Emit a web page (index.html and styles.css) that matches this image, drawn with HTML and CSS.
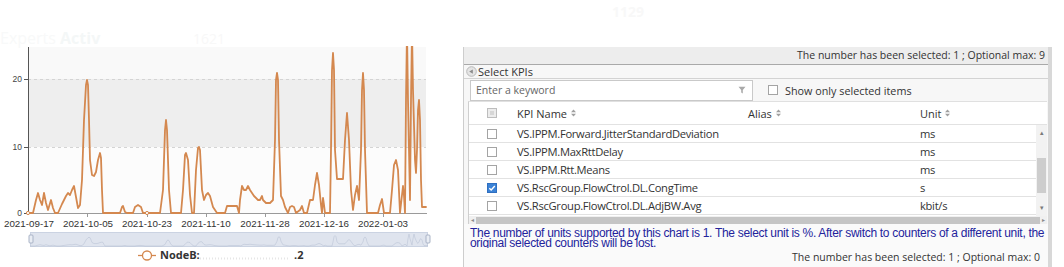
FILE: index.html
```html
<!DOCTYPE html>
<html lang="en">
<head>
<meta charset="utf-8">
<title>KPI chart</title>
<link rel="stylesheet" href="styles.css">
</head>
<body>
<div class="page">
  <section class="chart-col">
    <svg class="chart" width="463" height="267" viewBox="0 0 463 267">
      <defs>
        <clipPath id="plot"><rect x="28" y="46" width="399" height="168"/></clipPath>
        <path id="series" d="M28 213 L33 213 L36 200 L38 193 L40 200 L42 205 L44 193 L46 203 L48 210 L51 200 L53 208 L55 213 L58 213 L62 204 L66 196 L68 193 L70 195 L72 190 L74 186 L76 197 L78 208 L80 205 L82 180 L84 120 L86 85 L87 80 L88 85 L89 120 L90 160 L92 175 L94 176 L96 172 L98 160 L100 153 L101 158 L102 190 L103 213 L120 213 L122 207 L123 206 L125 212 L127 213 L133 213 L135 207 L138 205 L141 207 L143 213 L160 213 L163 190 L165 130 L166 120 L167 130 L169 190 L171 213 L181 213 L183 190 L185 155 L186 153 L188 160 L190 195 L192 213 L194 213 L196 170 L198 148 L199 147 L200 150 L202 190 L204 200 L206 195 L208 193 L210 196 L213 207 L217 213 L225 213 L227 206 L237 206 L239 213 L240 200 L242 186 L244 190 L246 190 L248 186 L250 190 L254 196 L258 200 L260 200 L262 196 L263 200 L266 203 L270 203 L273 200 L275 140 L276 80 L277 73 L278 80 L279 140 L281 196 L283 200 L285 207 L288 213 L290 207 L292 206 L294 207 L296 213 L300 210 L302 206 L304 213 L307 213 L310 200 L313 200 L315 185 L317 173 L319 185 L321 205 L322 213 L323 198 L324 205 L325 213 L330 213 L331 150 L332 70 L333 53 L334 70 L335 150 L337 179 L343 179 L345 140 L347 113 L349 140 L351 190 L353 210 L355 195 L357 186 L359 200 L361 150 L362 90 L363 73 L364 90 L365 150 L367 213 L378 213 L380 205 L382 199 L384 213 L390 213 L392 190 L394 165 L396 160 L398 170 L400 213 L402 195 L403 186 L404 196 L405 213 L406 100 L407 30 L408 100 L410 200 L411 100 L412 30 L413 90 L415 160 L416 173 L417 150 L418 110 L419 100 L420 120 L421 180 L422 207 L426 207"/>
      </defs>
      <text class="ghost-title" x="0" y="44">Experts <tspan class="ghost-bold">Activ</tspan></text>
      <text class="ghost-num" x="193" y="44">1621</text>

      <rect x="28" y="47" width="398" height="32" fill="#f9f9f9"/>
      <rect x="28" y="79" width="398" height="68" fill="#eeeeee"/>
      <rect x="28" y="147" width="398" height="66" fill="#fcfcfc"/>
      <line x1="28" y1="79.5" x2="426" y2="79.5" class="grid-dash"/>
      <line x1="28" y1="147.5" x2="426" y2="147.5" class="grid-dash"/>

      <line x1="28.5" y1="47" x2="28.5" y2="214" class="axis-y"/>
      <line x1="24" y1="79.5" x2="28" y2="79.5" class="axis-y"/>
      <line x1="24" y1="147.5" x2="28" y2="147.5" class="axis-y"/>
      <line x1="24" y1="213.5" x2="28" y2="213.5" class="axis-y"/>
      <text class="ylab" x="22" y="82">20</text>
      <text class="ylab" x="22" y="150">10</text>
      <text class="ylab" x="22" y="216">0</text>

      <line x1="28" y1="213.5" x2="427" y2="213.5" class="axis-x"/>
      <g class="axis-x">
        <line x1="87.5" y1="213" x2="87.5" y2="217"/>
        <line x1="147.5" y1="213" x2="147.5" y2="217"/>
        <line x1="206.5" y1="213" x2="206.5" y2="217"/>
        <line x1="265.5" y1="213" x2="265.5" y2="217"/>
        <line x1="324.5" y1="213" x2="324.5" y2="217"/>
        <line x1="383.5" y1="213" x2="383.5" y2="217"/>
      </g>
      <g class="xlab">
        <text x="29" y="227">2021-09-17</text>
        <text x="88" y="227">2021-10-05</text>
        <text x="147" y="227">2021-10-23</text>
        <text x="206" y="227">2021-11-10</text>
        <text x="265" y="227">2021-11-28</text>
        <text x="324" y="227">2021-12-16</text>
        <text x="383" y="227">2022-01-03</text>
      </g>

      <g clip-path="url(#plot)">
        <use href="#series" class="series-line"/>
      </g>
      <circle cx="28" cy="213" r="1.6" class="marker"/>
      <circle cx="147" cy="213" r="1.6" class="marker"/>

      <rect x="30.5" y="232.5" width="397" height="14" class="zoom-bg"/>
      <use href="#series" class="zoom-line" transform="translate(2 246) scale(1 0.065) translate(0 -213)"/>
      <rect x="29" y="235" width="4" height="8" rx="1" class="zoom-handle"/>
      <rect x="426" y="235" width="4" height="8" rx="1" class="zoom-handle"/>

      <line x1="138" y1="255.5" x2="156" y2="255.5" class="legend-line"/>
      <circle cx="147" cy="255.5" r="4.5" class="legend-dot"/>
      <text class="legend-text" x="160" y="259">NodeB:</text>
      <line x1="200" y1="258.5" x2="290" y2="258.5" class="redact"/>
      <text class="legend-text" x="294" y="259">.2</text>
    </svg>
  </section>

  <section class="kpi-col">
    <div class="ghost-top">1129</div>
    <div class="panel">
      <div class="panel-head">The number has been selected: 1 ; Optional max: 9</div>
      <div class="legend">
        <svg width="11" height="11" viewBox="0 0 11 11" class="legend-icon">
          <circle cx="5.5" cy="5.5" r="4.8" fill="#e4e4e4" stroke="#b9b9b9"/>
          <polygon points="3.2,5.6 6.8,3.4 6.8,7.8" fill="#8a8a8a"/>
        </svg>
        <span>Select KPIs</span>
      </div>
      <div class="toolbar">
        <div class="search">
          <span>Enter a keyword</span>
          <svg width="8" height="8" viewBox="0 0 8 8"><polygon points="0.5,0.8 7.5,0.8 4.8,4 4.8,7.5 3.2,6.6 3.2,4" fill="#a9a9a9"/></svg>
        </div>
        <label class="only"><span class="cb"></span>Show only selected items</label>
      </div>

      <div class="grid">
        <div class="row head-row">
          <span class="cell-cb"><span class="cb cb-partial"></span></span>
          <span class="hcell">KPI Name <svg class="sort" width="5" height="8" viewBox="0 0 5 8"><polygon points="0,3.2 2.5,0.5 5,3.2" /><polygon points="0,4.8 2.5,7.5 5,4.8"/></svg></span>
          <span class="hcell">Alias <svg class="sort" width="5" height="8" viewBox="0 0 5 8"><polygon points="0,3.2 2.5,0.5 5,3.2" /><polygon points="0,4.8 2.5,7.5 5,4.8"/></svg></span>
          <span class="hcell">Unit <svg class="sort" width="5" height="8" viewBox="0 0 5 8"><polygon points="0,3.2 2.5,0.5 5,3.2" /><polygon points="0,4.8 2.5,7.5 5,4.8"/></svg></span>
        </div>
        <div class="grid-body">
          <div class="rows">
            <div class="row"><span class="cell-cb"><span class="cb"></span></span><span>VS.IPPM.Forward.JitterStandardDeviation</span><span></span><span>ms</span></div>
            <div class="row"><span class="cell-cb"><span class="cb"></span></span><span>VS.IPPM.MaxRttDelay</span><span></span><span>ms</span></div>
            <div class="row"><span class="cell-cb"><span class="cb"></span></span><span>VS.IPPM.Rtt.Means</span><span></span><span>ms</span></div>
            <div class="row"><span class="cell-cb"><span class="cb cb-on"><svg width="8" height="8" viewBox="0 0 8 8"><polyline points="1.3,4.2 3.2,6 6.8,2" fill="none" stroke="#fff" stroke-width="1.4"/></svg></span></span><span>VS.RscGroup.FlowCtrol.DL.CongTime</span><span></span><span>s</span></div>
            <div class="row"><span class="cell-cb"><span class="cb"></span></span><span>VS.RscGroup.FlowCtrol.DL.AdjBW.Avg</span><span></span><span>kbit/s</span></div>
            <div class="row"><span class="cell-cb"><span class="cb"></span></span><span></span><span></span><span></span></div>
          </div>
          <div class="vscroll">
            <span class="arrow">&#9652;</span>
            <span class="vthumb"></span>
            <span class="arrow arrow-down">&#9662;</span>
          </div>
        </div>
        <div class="hscroll">
          <span class="harrow">&#9666;</span>
          <span class="hthumb"></span>
          <span class="harrow">&#9656;</span>
        </div>
      </div>

      <p class="note">The number of units supported by this chart is 1. The select unit is %. After switch to counters of a different unit, the original selected counters will be lost.</p>
      <div class="panel-foot">The number has been selected: 1 ; Optional max: 0</div>
    </div>
  </section>
</div>
</body>
</html>
```

FILE: styles.css
```css
* { box-sizing: border-box; margin: 0; padding: 0; }

body {
  margin: 0;
  width: 1064px;
  height: 267px;
  overflow: hidden;
  background: #ffffff;
  font-family: "Open Sans", "Noto Sans", sans-serif;
  color: #333333;
}

.page {
  display: flex;
  height: 267px;
}

/* ---------- chart ---------- */
.chart-col { width: 463px; flex: none; }
.chart { display: block; }

.ghost-title { font-family: "Open Sans", sans-serif; font-size: 16px; fill: #f8f9f9; }
.ghost-bold { font-weight: 700; fill: #f4f7f7; }
.ghost-num { font-family: "Open Sans", sans-serif; font-size: 14px; fill: #f8f8f8; }

.grid-dash { stroke: #d4d4d4; stroke-width: 1; stroke-dasharray: 3 3; }
.axis-y { stroke: #555555; stroke-width: 1; }
.axis-x { stroke: #9a9a9a; stroke-width: 1; }
.ylab { font-family: "Liberation Sans", sans-serif; font-size: 8.5px; fill: #444444; text-anchor: end; }
.xlab text { font-family: "Liberation Sans", sans-serif; font-size: 9.8px; fill: #333333; text-anchor: middle; }

.series-line {
  fill: none;
  stroke: #d4884f;
  stroke-width: 1.8;
  stroke-linejoin: round;
  stroke-linecap: round;
}
.marker { fill: #ffffff; stroke: #d4884f; stroke-width: 1; }

.zoom-bg { fill: #dfe4ee; stroke: #cbd3e2; stroke-width: 1; }
.zoom-line { fill: none; stroke: #b7c1d3; stroke-width: 1; vector-effect: non-scaling-stroke; }
.zoom-handle { fill: #e9edf4; stroke: #a9b3c6; stroke-width: 1; }

.legend-line { stroke: #d4884f; stroke-width: 1.3; }
.legend-dot { fill: #ffffff; stroke: #d4884f; stroke-width: 1.3; }
.legend-text { font-family: "Open Sans", sans-serif; font-size: 11px; font-weight: 700; fill: #333333; }
.redact { stroke: #e6e6e6; stroke-width: 2; stroke-dasharray: 1 2; }

/* ---------- KPI panel ---------- */
.kpi-col {
  width: 589px;
  flex: none;
  display: flex;
  flex-direction: column;
}

.ghost-top {
  height: 47px;
  padding: 2px 0 0 149px;
  font-size: 14px;
  font-weight: 700;
  color: #f8f8f8;
}

.panel {
  flex: 1;
  display: flex;
  flex-direction: column;
  background: #f7f7f7;
  border-left: 1px solid #cdcdcd;
  border-right: 4px solid #d8d8d8;
}

.panel-head {
  height: 18px;
  background: #ededed;
  border-bottom: 1px solid #a9a9a9;
  text-align: right;
  font-size: 10.5px;
  line-height: 17px;
  padding-right: 3px;
  color: #333333;
}

.legend {
  height: 13px;
  display: flex;
  align-items: center;
  gap: 1px;
  padding-left: 2px;
  font-size: 11px;
  line-height: 13px;
  color: #333333;
}
.legend-icon { display: block; }

.toolbar {
  height: 23px;
  display: flex;
  align-items: center;
  padding-left: 6px;
  border-top: 1px solid #d3d3d3;
}

.search {
  width: 283px;
  height: 21px;
  display: flex;
  align-items: center;
  justify-content: space-between;
  padding: 0 6px 0 5px;
  background: #ffffff;
  border: 1px solid #c9c9c9;
  font-size: 10.5px;
  color: #666666;
}
.search svg { display: block; }

.only {
  display: flex;
  align-items: center;
  gap: 7px;
  margin-left: 15px;
  font-size: 10.8px;
  color: #333333;
}

.cb {
  display: block;
  width: 10px;
  height: 10px;
  background: #ffffff;
  border: 1px solid #a4a4a4;
}
.cb-partial {
  background: #d6d6d6;
  border-color: #bdbdbd;
  box-shadow: inset 0 0 0 2px #ececec;
}
.cb-on {
  background: #3b82d6;
  border-color: #2f6fc0;
  display: flex;
  align-items: center;
  justify-content: center;
}
.cb-on svg { display: block; }

.grid {
  margin-left: 4px;
  width: 579px;
  background: #ffffff;
  border-left: 1px solid #cfcfcf;
  border-top: 1px solid #e0e0e0;
}

.row {
  display: grid;
  grid-template-columns: 48px 231px 172px 1fr;
  align-items: center;
  height: 18px;
  border-bottom: 1px solid #e2e2e2;
  font-size: 11.2px;
  letter-spacing: -0.3px;
  color: #333333;
  white-space: nowrap;
}
.head-row { height: 23px; border-bottom: 1px solid #e2e2e2; font-size: 11px; letter-spacing: 0; }

.cell-cb { padding-left: 18px; }

.hcell { display: flex; align-items: center; gap: 4px; }
.sort { display: block; fill: #a0a0a0; }

.grid-body {
  display: flex;
  height: 91px;
  overflow: hidden;
}
.rows { flex: 1; overflow: hidden; }

.vscroll {
  width: 11px;
  flex: none;
  background: #f2f2f2;
  display: flex;
  flex-direction: column;
  align-items: center;
}
.arrow { font-size: 7px; line-height: 16px; height: 16px; color: #7a7a7a; }
.arrow-down { margin-top: auto; }
.vthumb {
  width: 9px;
  height: 35px;
  margin-top: 17px;
  background: #cdcdcd;
}

.hscroll {
  height: 8px;
  display: flex;
  align-items: center;
  background: #f0f0f0;
}
.harrow { width: 7px; font-size: 6px; line-height: 8px; text-align: center; color: #8a8a8a; }
.hthumb { flex: 1; height: 7px; background: #c5c5c5; }

.note {
  padding: 4px 0 0 6px;
  font-family: "Liberation Sans", sans-serif;
  font-size: 12px;
  line-height: 10px;
  letter-spacing: -0.3px;
  color: #23239c;
  background: #fafafa;
}

.panel-foot {
  flex: 1;
  padding: 2px 8px 0 0;
  text-align: right;
  font-size: 10.5px;
  color: #333333;
  background: #fafafa;
}
```
